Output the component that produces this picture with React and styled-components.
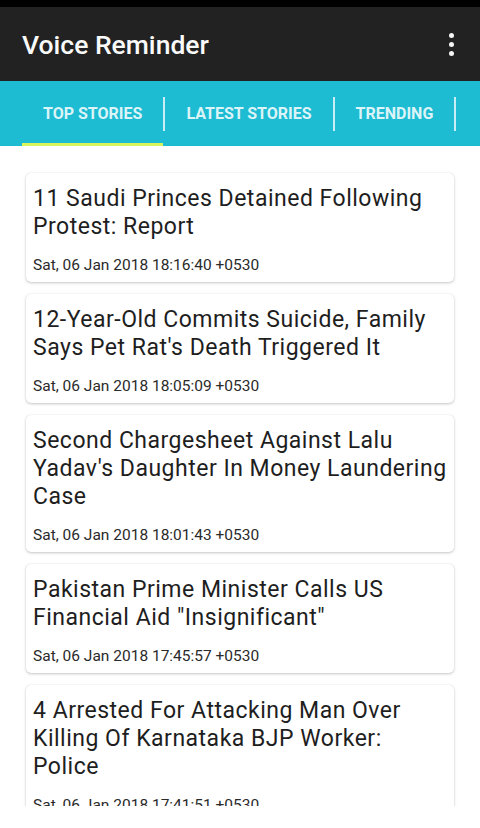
import React from "react";
import styled, { createGlobalStyle } from "styled-components";

const Global = createGlobalStyle`
  html, body { margin: 0; padding: 0; background: #fff; }
  body { font-family: Roboto, "Noto Sans", Arial, sans-serif; }
  * { box-sizing: border-box; }
`;

const Screen = styled.div`
  width: 480px;
  height: 828px;
  display: flex;
  flex-direction: column;
  background: #fff;
  overflow: hidden;
`;

const StatusBar = styled.div`
  height: 7px;
  background: #000;
  flex: none;
`;

const AppBar = styled.header`
  height: 74px;
  flex: none;
  background: #222222;
  display: flex;
  align-items: center;
  justify-content: space-between;
  padding: 0 22px 0 22px;
`;

const Title = styled.h1`
  margin: 0;
  font-family: Roboto, sans-serif;
  font-weight: 500;
  font-size: 26.5px;
  color: #fafafa;
`;

const Kebab = styled.div`
  display: flex;
  flex-direction: column;
  gap: 4px;
  align-items: center;
  padding: 4px;
`;

const Dot = styled.span`
  width: 5px;
  height: 5px;
  border-radius: 50%;
  background: #f5f5f5;
`;

const TabBar = styled.nav`
  height: 65px;
  flex: none;
  background: #1ebcd3;
  display: flex;
  align-items: stretch;
  padding-left: 22px;
`;

const Tab = styled.div`
  display: flex;
  align-items: center;
  padding: 3px 21px 0;
  font-family: Roboto, sans-serif;
  font-weight: 700;
  font-size: 16px;
  color: rgba(255, 255, 255, 0.86);
  border-bottom: 3px solid ${(p) => (p.$active ? "#d8f55e" : "transparent")};
  white-space: nowrap;
`;

const Divider = styled.span`
  width: 2px;
  height: 34px;
  align-self: center;
  background: rgba(255, 255, 255, 0.75);
`;

const List = styled.main`
  flex: 1;
  overflow: hidden;
  display: flex;
  flex-direction: column;
  gap: 12px;
  padding: 27px 26px 0;
`;

const Card = styled.article`
  flex: none;
  background: #fff;
  border-radius: 5px;
  box-shadow: 0 1px 3px rgba(0, 0, 0, 0.22), 0 0 1px rgba(0, 0, 0, 0.12);
  padding: 12px 7px 8px;
`;

const Headline = styled.h2`
  margin: 0;
  font-family: Roboto, sans-serif;
  font-weight: 400;
  font-size: 23px;
  letter-spacing: 0.5px;
  line-height: 28px;
  color: #1e1e1e;
`;

const DateLine = styled.div`
  margin-top: 15px;
  font-family: Roboto, sans-serif;
  font-size: 15.5px;
  line-height: 18px;
  color: #2a2a2a;
`;

const BottomSpace = styled.div`
  height: 22px;
  flex: none;
  background: #fff;
`;

const stories = [
  { t: "11 Saudi Princes Detained Following Protest: Report", d: "Sat, 06 Jan 2018 18:16:40 +0530" },
  { t: "12-Year-Old Commits Suicide, Family Says Pet Rat's Death Triggered It", d: "Sat, 06 Jan 2018 18:05:09 +0530" },
  { t: "Second Chargesheet Against Lalu Yadav's Daughter In Money Laundering Case", d: "Sat, 06 Jan 2018 18:01:43 +0530" },
  { t: "Pakistan Prime Minister Calls US Financial Aid \"Insignificant\"", d: "Sat, 06 Jan 2018 17:45:57 +0530" },
  { t: "4 Arrested For Attacking Man Over Killing Of Karnataka BJP Worker: Police", d: "Sat, 06 Jan 2018 17:41:51 +0530" },
];

export default function App() {
  return (
    <Screen>
      <Global />
      <StatusBar />
      <AppBar>
        <Title>Voice Reminder</Title>
        <Kebab>
          <Dot />
          <Dot />
          <Dot />
        </Kebab>
      </AppBar>
      <TabBar>
        <Tab $active>TOP STORIES</Tab>
        <Divider />
        <Tab>LATEST STORIES</Tab>
        <Divider />
        <Tab>TRENDING</Tab>
        <Divider />
      </TabBar>
      <List>
        {stories.map((s) => (
          <Card key={s.d}>
            <Headline>{s.t}</Headline>
            <DateLine>{s.d}</DateLine>
          </Card>
        ))}
      </List>
      <BottomSpace />
    </Screen>
  );
}
